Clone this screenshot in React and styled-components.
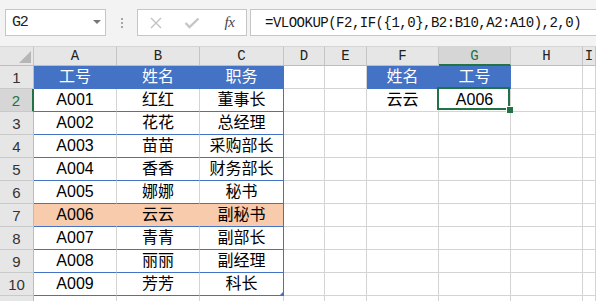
import React from "react";
import styled, { createGlobalStyle } from "styled-components";

const BLUE = "#4472c4";
const ORANGE = "#f8cbad";
const GREEN = "#217346";
const GRID = "#d4d4d4";

const GlobalStyle = createGlobalStyle`
  html, body {
    margin: 0;
    padding: 0;
    background: #fff;
    overflow: hidden;
  }
`;

const Window = styled.div`
  width: 596px;
  height: 301px;
  overflow: hidden;
  font-family: "Liberation Sans", "Noto Sans CJK SC", sans-serif;
`;

const Toolbar = styled.div`
  display: flex;
  align-items: flex-start;
  height: 47px;
  box-sizing: border-box;
  padding: 9px 0 0 5px;
  background: #f3f3f3;
  border-bottom: 1px solid #d5d5d5;
`;

const NameBox = styled.div`
  width: 101px;
  height: 27px;
  box-sizing: border-box;
  flex-shrink: 0;
  border: 1px solid #c6c6c6;
  background: #fff;
  display: flex;
  align-items: center;
  justify-content: space-between;
  padding: 0 4px 0 6px;
  font: 15px "Liberation Mono", monospace;
  letter-spacing: -1.2px;
  color: #222;
`;

const Caret = styled.span`
  width: 0;
  height: 0;
  border-left: 4px solid transparent;
  border-right: 4px solid transparent;
  border-top: 4px solid #777;
  margin-bottom: 2px;
`;

const Grip = styled.div`
  width: 31px;
  height: 27px;
  flex-shrink: 0;
  display: flex;
  flex-direction: column;
  align-items: center;
  justify-content: center;
  gap: 2px;

  span {
    width: 2px;
    height: 2px;
    background: #a6a6a6;
  }
`;

const FxBox = styled.div`
  width: 110px;
  height: 27px;
  box-sizing: border-box;
  flex-shrink: 0;
  border: 1px solid #c6c6c6;
  background: #fff;
  display: flex;
`;

const FxSlot = styled.div`
  width: 37px;
  display: flex;
  align-items: center;
  justify-content: center;
`;

const FxLabel = styled.span`
  font: italic 15px "Liberation Serif", serif;
  color: #444;
  letter-spacing: -0.5px;
  margin-left: 3px;
`;

const FormulaBar = styled.div`
  flex: 1;
  height: 27px;
  box-sizing: border-box;
  margin-left: 3px;
  border: 1px solid #c6c6c6;
  border-right: none;
  background: #fff;
  display: flex;
  align-items: center;
  padding-left: 14px;
  font: 14px "Liberation Mono", monospace;
  letter-spacing: -0.5px;
  color: #111;
  white-space: nowrap;
  overflow: hidden;
`;

const Sheet = styled.div`
  display: grid;
  grid-template-columns: 34px 83px 83px 84px 41px 42px 72px 72px 72px 1fr;
  grid-template-rows: 19px;
  grid-auto-rows: 23px;
`;

const ColHead = styled.div`
  position: relative;
  box-sizing: border-box;
  background: ${(p) => (p.$active ? "#d6d6d6" : "#e6e6e6")};
  border-right: 1px solid #c4c4c4;
  border-bottom: ${(p) => (p.$active ? `2px solid ${GREEN}` : "1px solid #bdbdbd")};
  color: ${(p) => (p.$active ? GREEN : "#222")};
  display: flex;
  align-items: center;
  justify-content: center;
  font: 14px "Liberation Mono", monospace;
`;

const Corner = styled(ColHead)`
  &::after {
    content: "";
    position: absolute;
    right: 2px;
    bottom: 2px;
    width: 0;
    height: 0;
    border-left: 12px solid transparent;
    border-bottom: 12px solid #b6b6b6;
  }
`;

const RowHead = styled.div`
  box-sizing: border-box;
  background: ${(p) => (p.$active ? "#d6d6d6" : "#e6e6e6")};
  border-right: ${(p) => (p.$active ? `2px solid ${GREEN}` : "1px solid #bdbdbd")};
  border-bottom: 1px solid #c9c9c9;
  color: ${(p) => (p.$active ? GREEN : "#333")};
  display: flex;
  align-items: center;
  justify-content: center;
  font: 15px "Liberation Sans", sans-serif;
`;

const Cell = styled.div`
  position: relative;
  box-sizing: border-box;
  background: ${(p) => p.$fill || "#fff"};
  border-right: 1px solid ${(p) => p.$right || GRID};
  border-bottom: 1px solid ${(p) => p.$bottom || GRID};
  color: ${(p) => p.$ink || "#000"};
  display: flex;
  align-items: center;
  justify-content: center;
  font-size: 16px;
  line-height: 1;
  white-space: nowrap;
`;

const Selection = styled.div`
  position: absolute;
  top: -2px;
  left: -2px;
  right: 0;
  bottom: 1px;
  border: 2px solid ${GREEN};
  z-index: 2;

  &::after {
    content: "";
    position: absolute;
    right: -5px;
    bottom: -5px;
    width: 6px;
    height: 6px;
    background: ${GREEN};
    border: 1px solid #fff;
    border-right: none;
    border-bottom: none;
  }
`;

const TableGrip = styled.span`
  position: absolute;
  right: -1px;
  bottom: -1px;
  width: 0;
  height: 0;
  border-left: 5px solid transparent;
  border-bottom: 5px solid ${BLUE};
`;

const LETTERS = ["A", "B", "C", "D", "E", "F", "G", "H", "I"];

const TABLE = [
  ["工号", "姓名", "职务"],
  ["A001", "红红", "董事长"],
  ["A002", "花花", "总经理"],
  ["A003", "苗苗", "采购部长"],
  ["A004", "香香", "财务部长"],
  ["A005", "娜娜", "秘书"],
  ["A006", "云云", "副秘书"],
  ["A007", "青青", "副部长"],
  ["A008", "丽丽", "副经理"],
  ["A009", "芳芳", "科长"],
];

const LOOKUP = [
  ["姓名", "工号"],
  ["云云", "A006"],
];

function cellProps(r, c) {
  // r is the sheet row (1-based), c the column index (0 = A)
  if (c < 3 && r <= 10) {
    const edge = c === 2 ? BLUE : null;
    if (r === 1) return { $fill: BLUE, $ink: "#fff", $right: BLUE, $bottom: BLUE };
    if (r === 7) return { $fill: ORANGE, $right: edge || ORANGE, $bottom: BLUE };
    return { $right: edge || GRID, $bottom: BLUE };
  }
  if ((c === 5 || c === 6) && r === 1) {
    return { $fill: BLUE, $ink: "#fff", $right: BLUE, $bottom: BLUE };
  }
  return {};
}

function cellText(r, c) {
  if (c < 3 && r <= 10) return TABLE[r - 1][c];
  if ((c === 5 || c === 6) && r <= 2) return LOOKUP[r - 1][c - 5];
  return "";
}

const CrossIcon = () => (
  <svg width="12" height="12" viewBox="0 0 12 12">
    <path d="M1 1 L11 11 M11 1 L1 11" stroke="#c2c2c2" strokeWidth="1.4" fill="none" />
  </svg>
);

const CheckIcon = () => (
  <svg width="16" height="12" viewBox="0 0 16 12">
    <path d="M1.5 6 L5.5 10 L14.5 1.5" stroke="#c6c6c6" strokeWidth="2.4" fill="none" />
  </svg>
);

export default function App() {
  const rows = Array.from({ length: 11 }, (_, i) => i + 1);

  return (
    <Window>
      <GlobalStyle />
      <Toolbar>
        <NameBox>
          G2
          <Caret />
        </NameBox>
        <Grip>
          <span />
          <span />
          <span />
        </Grip>
        <FxBox>
          <FxSlot>
            <CrossIcon />
          </FxSlot>
          <FxSlot>
            <CheckIcon />
          </FxSlot>
          <FxSlot>
            <FxLabel>fx</FxLabel>
          </FxSlot>
        </FxBox>
        <FormulaBar>=VLOOKUP(F2,IF({"{1,0}"},B2:B10,A2:A10),2,0)</FormulaBar>
      </Toolbar>

      <Sheet>
        <Corner />
        {LETTERS.map((l) => (
          <ColHead key={l} $active={l === "G"}>
            {l}
          </ColHead>
        ))}

        {rows.map((r) => (
          <React.Fragment key={r}>
            {/* row 11 is only a sliver at the bottom edge, its number falls outside */}
            <RowHead $active={r === 2}>{r <= 10 ? r : ""}</RowHead>
            {LETTERS.map((l, c) => (
              <Cell key={l} {...cellProps(r, c)}>
                {cellText(r, c)}
                {r === 2 && c === 6 && <Selection />}
                {r === 10 && c === 2 && <TableGrip />}
              </Cell>
            ))}
          </React.Fragment>
        ))}
      </Sheet>
    </Window>
  );
}
